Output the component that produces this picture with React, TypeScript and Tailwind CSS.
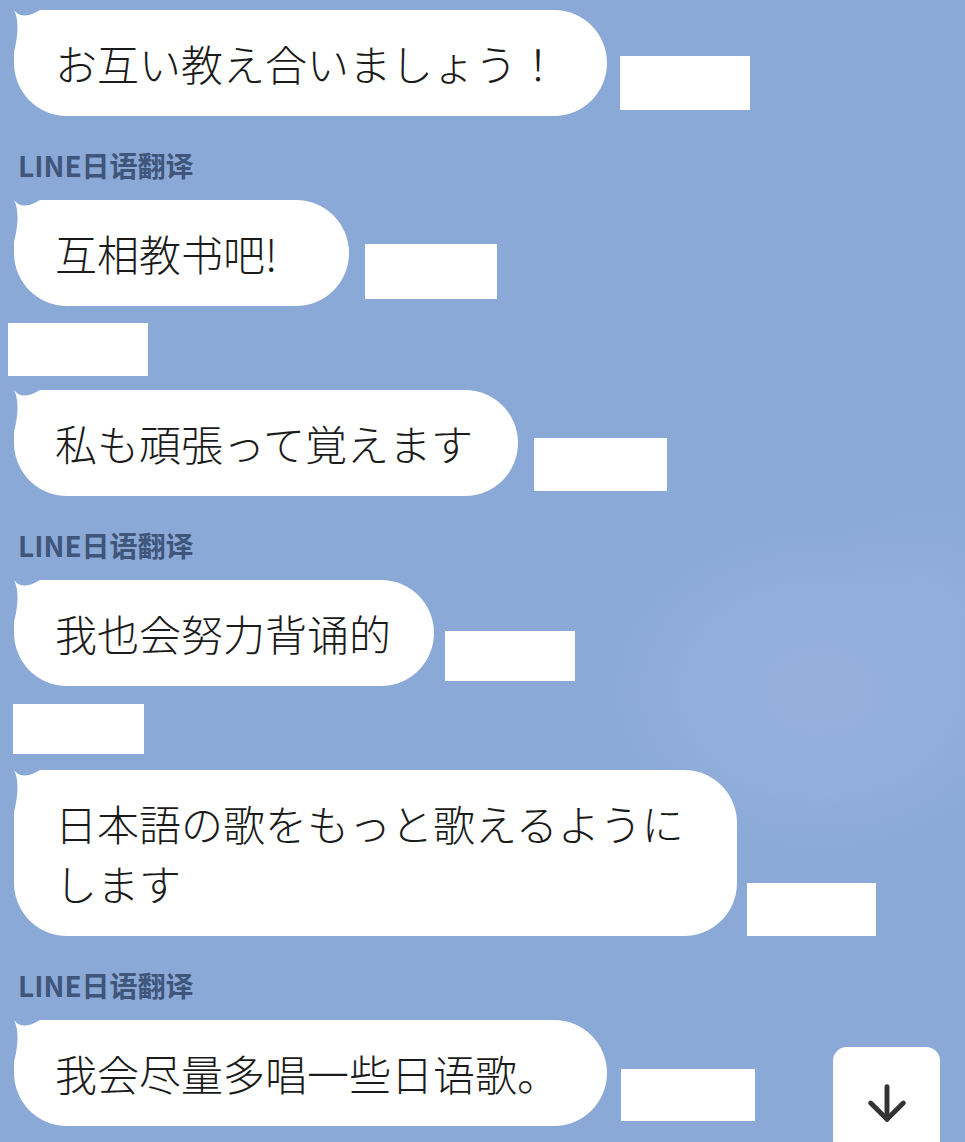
import { ArrowDown } from "lucide-react";

type Msg = {
  text: string;
  bubble: string;
  mask: string;
  head?: "label" | "maskA" | "maskB";
};

const messages: Msg[] = [
  { text: "お互い教え合いましょう！", bubble: "w-[593px]", mask: "ml-[13px] mb-[6px] w-[130px] h-[54px]" },
  { head: "label", text: "互相教书吧!", bubble: "w-[335px]", mask: "ml-[16px] mb-[7px] w-[132px] h-[55px]" },
  { head: "maskA", text: "私も頑張って覚えます", bubble: "w-[504px]", mask: "ml-[16px] mb-[5px] w-[133px] h-[53px]" },
  { head: "label", text: "我也会努力背诵的", bubble: "w-[420px]", mask: "ml-[11px] mb-[5px] w-[130px] h-[50px]" },
  { head: "maskB", text: "日本語の歌をもっと歌えるようにします", bubble: "w-[723px]", mask: "ml-[10px] mb-0 w-[129px] h-[53px]" },
  { head: "label", text: "我会尽量多唱一些日语歌。", bubble: "w-[593px]", mask: "ml-[14px] mb-[5px] w-[134px] h-[52px]" },
];

// little speech tail in the top-left corner of each bubble
function Tail() {
  return (
    <svg className="absolute left-0 top-0" width="54" height="54" viewBox="0 0 54 54">
      <path d="M0 0 Q8 11 26 0 L54 0 L54 54 L0 54 L0 42 Q7 14 0 0 Z" fill="#ffffff" />
    </svg>
  );
}

function Head({ kind }: { kind: Msg["head"] }) {
  if (kind === "label")
    return (
      <div className="h-[84px] pt-[34px] pl-[4px] text-[28px] leading-[30px] font-bold text-[#40557a]">
        LINE日语翻译
      </div>
    );
  if (kind === "maskA")
    return (
      <div className="h-[84px] pt-[17px]">
        <div className="ml-[-6px] w-[140px] h-[53px] bg-white" />
      </div>
    );
  return (
    <div className="h-[84px] pt-[18px]">
      <div className="ml-[-1px] w-[131px] h-[50px] bg-white" />
    </div>
  );
}

export default function App() {
  return (
    <div
      className="relative h-[1142px] w-[965px] overflow-hidden bg-[#8aa9d7] bg-[radial-gradient(ellipse_220px_170px_at_820px_690px,#94b0db_0%,#92aedb_60%,transparent_100%),radial-gradient(ellipse_120px_120px_at_930px_610px,#93afdb_0%,transparent_100%)]"
      style={{ fontFamily: '"Noto Sans CJK JP", "Noto Sans", sans-serif' }}
    >
      <div className="flex flex-col px-[14px] pt-[10px]">
        {messages.map((m, i) => (
          <div key={i}>
            {m.head && <Head kind={m.head} />}
            <div className="flex items-end">
              <div className={`relative shrink-0 rounded-[53px] bg-white pl-[41px] pr-[40px] py-[23px] text-[42px] leading-[60px] font-light text-[#1b1b1b] ${m.bubble}`}>
                <Tail />
                <span className="relative">{m.text}</span>
              </div>
              <div className={`shrink-0 bg-white ${m.mask}`} />
            </div>
          </div>
        ))}
      </div>

      <button className="absolute left-[833px] top-[1047px] flex h-[110px] w-[107px] justify-center rounded-[14px] bg-white pt-[28px]">
        <ArrowDown className="h-[56px] w-[56px] text-[#333333]" strokeWidth={2.1} />
      </button>
    </div>
  );
}
